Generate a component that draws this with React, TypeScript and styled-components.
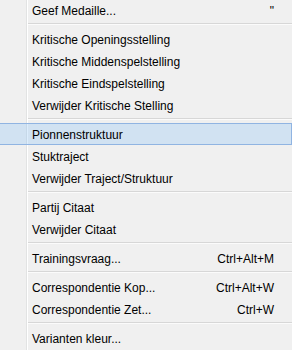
import React from "react";
import styled, { createGlobalStyle } from "styled-components";

const GlobalStyle = createGlobalStyle`
  html, body {
    margin: 0;
    padding: 0;
    background: #f0f0f0;
  }
`;

const Menu = styled.ul`
  list-style: none;
  margin: -1px 0 0 0;
  padding: 0;
  width: 292px;
  height: 351px;
  overflow: hidden;
  font-family: "Segoe UI", "Liberation Sans", Arial, sans-serif;
  font-size: 12px;
  color: #000;
  background: linear-gradient(
    to right,
    transparent 26px,
    #e2e3e3 26px,
    #e2e3e3 27px,
    #ffffff 27px,
    #ffffff 28px,
    transparent 28px
  );
`;

const Item = styled.li<{ $hot?: boolean }>`
  box-sizing: border-box;
  height: 22px;
  display: flex;
  align-items: center;
  justify-content: space-between;
  padding: 0 17px 0 32px;
  line-height: 22px;
  white-space: nowrap;
  border: 1px solid ${(p) => (p.$hot ? "#90b4e2" : "transparent")};
  border-left: none;
  background: ${(p) => (p.$hot ? "rgba(116, 184, 248, 0.25)" : "transparent")};
`;

const Label = styled.span`
  padding-top: 1px;
`;

const Shortcut = styled.span`
  padding-top: 1px;
`;

const Separator = styled.li`
  height: 7px;
  padding-top: 2px;
  box-sizing: border-box;
  margin-left: 28px;

  &::after {
    content: "";
    display: block;
    height: 1px;
    background: #d7d7d7;
    border-bottom: 1px solid #fbfbfb;
  }
`;

type Entry = { label: string; shortcut?: string; hot?: boolean } | "sep";

const entries: Entry[] = [
  { label: "Geef Medaille...", shortcut: "\"" },
  "sep",
  { label: "Kritische Openingsstelling" },
  { label: "Kritische Middenspelstelling" },
  { label: "Kritische Eindspelstelling" },
  { label: "Verwijder Kritische Stelling" },
  "sep",
  { label: "Pionnenstruktuur", hot: true },
  { label: "Stuktraject" },
  { label: "Verwijder Traject/Struktuur" },
  "sep",
  { label: "Partij Citaat" },
  { label: "Verwijder Citaat" },
  "sep",
  { label: "Trainingsvraag...", shortcut: "Ctrl+Alt+M" },
  "sep",
  { label: "Correspondentie Kop...", shortcut: "Ctrl+Alt+W" },
  { label: "Correspondentie Zet...", shortcut: "Ctrl+W" },
  "sep",
  { label: "Varianten kleur..." },
];

export default function App() {
  return (
    <>
      <GlobalStyle />
      <Menu>
        {entries.map((entry, i) =>
          entry === "sep" ? (
            <Separator key={i} />
          ) : (
            <Item key={i} $hot={entry.hot}>
              <Label>{entry.label}</Label>
              {entry.shortcut && <Shortcut>{entry.shortcut}</Shortcut>}
            </Item>
          )
        )}
      </Menu>
    </>
  );
}
